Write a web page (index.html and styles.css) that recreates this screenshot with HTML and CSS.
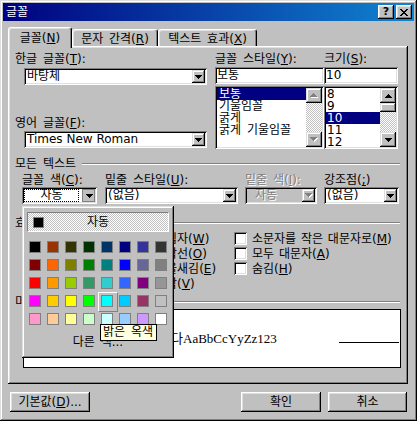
FILE: index.html
```html
<!DOCTYPE html>
<html lang="ko">
<head>
<meta charset="utf-8">
<title>글꼴</title>
<link rel="stylesheet" href="styles.css">
</head>
<body>
<div class="window">
  <div class="titlebar">
    <span class="title">글꼴</span>
    <div class="tbtns">
      <span class="tbtn help">?</span>
      <span class="tbtn close"><svg width="8" height="7" viewBox="0 0 8 7"><path d="M0 0h2v1h-2zM6 0h2v1h-2zM1 1h2v1h-2zM5 1h2v1h-2zM2 2h4v1h-4zM3 3h2v1h-2zM2 4h4v1h-4zM1 5h2v1h-2zM5 5h2v1h-2zM0 6h2v1h-2zM6 6h2v1h-2z"/></svg></span>
    </div>
  </div>

  <div class="main">
    <div class="tabs">
      <div class="tab active">글꼴(<u>N</u>)</div>
      <div class="tab t2">문자 간격(<u>R</u>)</div>
      <div class="tab t3">텍스트 효과(<u>X</u>)</div>
    </div>

    <div class="panel">
      <div class="fontsec">
        <div class="col-l">
          <div class="lbl">한글 글꼴(<u>T</u>):</div>
          <div class="combo han"><span class="val">바탕체</span><span class="dd"><svg width="7" height="4" viewBox="0 0 7 4"><path d="M0 0h7v1h-1v1h-1v1h-1v1h-1v-1h-1v-1h-1v-1h-1z"/></svg></span></div>
          <div class="lbl lbl-en">영어 글꼴(<u>F</u>):</div>
          <div class="combo en"><span class="val">Times New Roman</span><span class="dd"><svg width="7" height="4" viewBox="0 0 7 4"><path d="M0 0h7v1h-1v1h-1v1h-1v1h-1v-1h-1v-1h-1v-1h-1z"/></svg></span></div>
        </div>
        <div class="col-m">
          <div class="lbl">글꼴 스타일(<u>Y</u>):</div>
          <div class="field">보통</div>
          <div class="list">
            <div class="items">
              <div class="it sel">보통</div>
              <div class="it">기울임꼴</div>
              <div class="it">굵게</div>
              <div class="it">굵게 기울임꼴</div>
            </div>
            <div class="sb">
              <span class="sbb"><svg width="8" height="5" viewBox="0 0 8 5"><path fill="#fff" d="M4 1h1v1h1v1h1v1h1v1h-7v-1h1v-1h1v-1h1z"/><path fill="#808080" d="M3 0h1v1h1v1h1v1h1v1h-7v-1h1v-1h1v-1h1z"/></svg></span>
              <span class="track"></span>
              <span class="sbb"><svg width="8" height="5" viewBox="0 0 8 5"><path fill="#fff" d="M1 1h7v1h-1v1h-1v1h-1v1h-1v-1h-1v-1h-1v-1h-1z"/><path fill="#808080" d="M0 0h7v1h-1v1h-1v1h-1v1h-1v-1h-1v-1h-1v-1h-1z"/></svg></span>
            </div>
          </div>
        </div>
        <div class="col-r">
          <div class="lbl">크기(<u>S</u>):</div>
          <div class="field">10</div>
          <div class="list">
            <div class="items">
              <div class="it">8</div>
              <div class="it">9</div>
              <div class="it sel">10</div>
              <div class="it">11</div>
              <div class="it">12</div>
            </div>
            <div class="sb">
              <span class="sbb"><svg width="7" height="4" viewBox="0 0 7 4"><path d="M3 0h1v1h1v1h1v1h1v1h-7v-1h1v-1h1v-1h1z"/></svg></span>
              <span class="thumb"></span>
              <span class="track"></span>
              <span class="sbb"><svg width="7" height="4" viewBox="0 0 7 4"><path d="M0 0h7v1h-1v1h-1v1h-1v1h-1v-1h-1v-1h-1v-1h-1z"/></svg></span>
            </div>
          </div>
        </div>
      </div>

      <div class="ghead h-all"><span>모든 텍스트</span><i class="etch"></i></div>

      <div class="attrs">
        <div class="lbl">글꼴 색(<u>C</u>):</div>
        <div class="lbl">밑줄 스타일(<u>U</u>):</div>
        <div class="lbl dis">밑줄 색(<u>I</u>):</div>
        <div class="lbl">강조점(<u>;</u>)</div>
        <div class="combo fcolor"><span class="val"><span class="focus">자동</span></span><span class="dd pressed"><svg width="7" height="4" viewBox="0 0 7 4"><path d="M0 0h7v1h-1v1h-1v1h-1v1h-1v-1h-1v-1h-1v-1h-1z"/></svg></span></div>
        <div class="combo ustyle"><span class="val">(없음)</span><span class="dd"><svg width="7" height="4" viewBox="0 0 7 4"><path d="M0 0h7v1h-1v1h-1v1h-1v1h-1v-1h-1v-1h-1v-1h-1z"/></svg></span></div>
        <div class="combo ucolor disabled"><span class="val">자동</span><span class="dd"><svg width="8" height="5" viewBox="0 0 8 5"><path fill="#fff" d="M1 1h7v1h-1v1h-1v1h-1v1h-1v-1h-1v-1h-1v-1h-1z"/><path fill="#808080" d="M0 0h7v1h-1v1h-1v1h-1v1h-1v-1h-1v-1h-1v-1h-1z"/></svg></span></div>
        <div class="combo emph"><span class="val">(없음)</span><span class="dd"><svg width="7" height="4" viewBox="0 0 7 4"><path d="M0 0h7v1h-1v1h-1v1h-1v1h-1v-1h-1v-1h-1v-1h-1z"/></svg></span></div>
      </div>

      <div class="ghead h-fx"><span>효과</span><i class="etch"></i></div>

      <div class="effects">
        <div class="chk"><i class="box"></i><span>취소선(<u>K</u>)</span></div>
        <div class="chk"><i class="box"></i><span>이중 취소선(<u>L</u>)</span></div>
        <div class="chk"><i class="box"></i><span>위 첨자(<u>P</u>)</span></div>
        <div class="chk"><i class="box"></i><span>아래 첨자(<u>B</u>)</span></div>
        <div class="chk"><i class="box"></i><span>그림자(<u>W</u>)</span></div>
        <div class="chk"><i class="box"></i><span>외곽선(<u>O</u>)</span></div>
        <div class="chk"><i class="box"></i><span>돋을새김(<u>E</u>)</span></div>
        <div class="chk"><i class="box"></i><span>양각(<u>V</u>)</span></div>
        <div class="chk"><i class="box"></i><span>소문자를 작은 대문자로(<u>M</u>)</span></div>
        <div class="chk"><i class="box"></i><span>모두 대문자(<u>A</u>)</span></div>
        <div class="chk"><i class="box"></i><span>숨김(<u>H</u>)</span></div>
      </div>

      <div class="ghead h-pv"><span>미리 보기</span><i class="etch"></i></div>

      <div class="preview">
        <span class="pv-pad"></span>
        <span class="pv-text"><span class="ko">가나다</span>AaBbCcYyZz123</span>
        <span class="pv-line"></span>
      </div>
    </div>

    <div class="buttons">
      <div class="btn"><span>기본값(<u>D</u>)...</span></div>
      <span class="spacer"></span>
      <div class="btn"><span>확인</span></div>
      <div class="btn cancel"><span>취소</span></div>
    </div>
  </div>

  <div class="popup">
    <div class="auto"><i class="autosw"></i><span>자동</span><span></span></div>
    <div class="swatches">
      <span class="sw" style="background:#000000"></span>
      <span class="sw" style="background:#993300"></span>
      <span class="sw" style="background:#333300"></span>
      <span class="sw" style="background:#003300"></span>
      <span class="sw" style="background:#003366"></span>
      <span class="sw" style="background:#000080"></span>
      <span class="sw" style="background:#333399"></span>
      <span class="sw" style="background:#333333"></span>
      <span class="sw" style="background:#800000"></span>
      <span class="sw" style="background:#ff6600"></span>
      <span class="sw" style="background:#808000"></span>
      <span class="sw" style="background:#008000"></span>
      <span class="sw" style="background:#008080"></span>
      <span class="sw" style="background:#0000ff"></span>
      <span class="sw" style="background:#666699"></span>
      <span class="sw" style="background:#808080"></span>
      <span class="sw" style="background:#ff0000"></span>
      <span class="sw" style="background:#ff9900"></span>
      <span class="sw" style="background:#99cc00"></span>
      <span class="sw" style="background:#339966"></span>
      <span class="sw" style="background:#33cccc"></span>
      <span class="sw" style="background:#3366ff"></span>
      <span class="sw" style="background:#800080"></span>
      <span class="sw" style="background:#969696"></span>
      <span class="sw" style="background:#ff00ff"></span>
      <span class="sw" style="background:#ffcc00"></span>
      <span class="sw" style="background:#ffff00"></span>
      <span class="sw" style="background:#00ff00"></span>
      <span class="sw cur" style="background:#00ffff"></span>
      <span class="sw" style="background:#00ccff"></span>
      <span class="sw" style="background:#993366"></span>
      <span class="sw" style="background:#c0c0c0"></span>
      <span class="sw" style="background:#ff99cc"></span>
      <span class="sw" style="background:#ffcc99"></span>
      <span class="sw" style="background:#ffff99"></span>
      <span class="sw" style="background:#ccffcc"></span>
      <span class="sw" style="background:#ccffff"></span>
      <span class="sw" style="background:#99ccff"></span>
      <span class="sw" style="background:#cc99ff"></span>
      <span class="sw" style="background:#ffffff"></span>
    </div>
    <div class="more">다른 색...</div>
  </div>

  <div class="tip">밝은 옥색</div>
</div>
</body>
</html>
```

FILE: styles.css
```css
* { box-sizing: border-box; margin: 0; padding: 0; }

html, body { width: 417px; height: 421px; overflow: hidden; }

body {
  font-family: "DejaVu Sans", "Noto Sans CJK KR", sans-serif;
  font-size: 12px;
  line-height: 12px;
  color: #000;
  background: #c0c0c0;
  word-spacing: 2px;
}

u { text-decoration: underline; text-underline-offset: 1px; }

.window {
  position: relative;
  width: 417px;
  height: 421px;
  padding: 3px;
  background: #c0c0c0;
  box-shadow: inset -1px -1px #000, inset 1px 1px #dfdfdf, inset -2px -2px #808080, inset 2px 2px #fff;
}

/* title bar */
.titlebar {
  height: 18px;
  display: flex;
  align-items: center;
  justify-content: space-between;
  padding: 0 2px 0 3px;
  background: linear-gradient(90deg, #000080, #1084d0);
}
.title { color: #fff; line-height: 14px; }
.tbtns { display: flex; gap: 2px; }
.tbtn {
  width: 16px;
  height: 14px;
  display: flex;
  align-items: center;
  justify-content: center;
  background: #c0c0c0;
  box-shadow: inset -1px -1px #000, inset 1px 1px #fff, inset -2px -2px #808080, inset 2px 2px #dfdfdf;
  font: bold 11px/14px "DejaVu Sans", sans-serif;
}
.tbtn svg { display: block; }

/* main */
.main { padding: 6px 6px 0 5px; }

.tabs {
  display: flex;
  align-items: flex-end;
  height: 19px;
  position: relative;
  z-index: 1;
}
.tab {
  height: 17px;
  padding-top: 3px;
  text-align: center;
  white-space: nowrap;
  background: #c0c0c0;
  border: 1px solid #fff;
  border-right-color: #000;
  border-bottom: 0;
  border-radius: 3px 3px 0 0;
  box-shadow: inset -1px 0 #808080, inset 1px 1px #dfdfdf;
}
.tab.active { width: 64px; height: 21px; margin-bottom: -2px; padding-top: 4px; }
.tab.t2 { width: 86px; }
.tab.t3 { width: 99px; }

.panel {
  height: 338px;
  padding: 2px;
  box-shadow: inset -1px -1px #000, inset 1px 1px #fff, inset -2px -2px #808080, inset 2px 2px #dfdfdf;
}

.lbl { height: 12px; line-height: 12px; white-space: nowrap; }
.dis { color: #808080; text-shadow: 1px 1px #fff; }

/* font section */
.fontsec { display: flex; margin-top: 5px; padding-left: 5px; height: 96px; }
.col-l { width: 200px; display: flex; flex-direction: column; }
.col-m { width: 109px; display: flex; flex-direction: column; }
.col-r { width: 74px; display: flex; flex-direction: column; }

.col-l .combo { margin-left: 9px; width: 183px; margin-top: 3px; }
.col-l .lbl-en { margin-top: 32px; }
.col-l .combo.en { margin-top: 2px; }
.combo.en .val { word-spacing: 0; }

.combo {
  display: flex;
  align-items: center;
  height: 17px;
  padding: 2px;
  background: #fff;
  box-shadow: inset 1px 1px #808080, inset -1px -1px #fff, inset 2px 2px #000, inset -2px -2px #dfdfdf;
}
.combo .val { flex: 1; padding-left: 1px; line-height: 13px; white-space: nowrap; overflow: hidden; }
.dd {
  width: 13px;
  height: 13px;
  flex: none;
  display: flex;
  align-items: center;
  justify-content: center;
  background: #c0c0c0;
  box-shadow: inset -1px -1px #000, inset 1px 1px #dfdfdf, inset -2px -2px #808080, inset 2px 2px #fff;
}
.dd svg, .sbb svg { display: block; }
.dd.pressed { box-shadow: inset 0 0 0 1px #808080; padding: 1px 0 0 1px; }

.field {
  height: 17px;
  margin-top: 2px;
  padding: 2px;
  line-height: 13px;
  background: #fff;
  box-shadow: inset 1px 1px #808080, inset -1px -1px #fff, inset 2px 2px #000, inset -2px -2px #dfdfdf;
}
.list {
  height: 63px;
  margin-top: 2px;
  padding: 2px;
  display: flex;
  background: #fff;
  box-shadow: inset 1px 1px #808080, inset -1px -1px #fff, inset 2px 2px #000, inset -2px -2px #dfdfdf;
}
.items { flex: 1; overflow: hidden; }
.it { height: 12px; line-height: 12px; padding-left: 1px; white-space: nowrap; }
.col-m .it { padding-left: 2px; }
.it.sel { background: #000080; color: #fff; }

.sb { width: 16px; flex: none; display: flex; flex-direction: column; }
.sbb, .thumb {
  flex: none;
  display: flex;
  align-items: center;
  justify-content: center;
  background: #c0c0c0;
  box-shadow: inset -1px -1px #000, inset 1px 1px #dfdfdf, inset -2px -2px #808080, inset 2px 2px #fff;
}
.sbb { height: 15px; }
.thumb { height: 9px; }
.track {
  flex: 1;
  background-color: #fff;
  background-image: repeating-conic-gradient(#c0c0c0 0 25%, #fff 0 50%);
  background-size: 2px 2px;
}

/* group headers */
.ghead { display: flex; align-items: center; height: 12px; padding: 0 6px 0 5px; white-space: nowrap; }
.etch { flex: 1; height: 2px; margin-left: 6px; border-top: 1px solid #808080; border-bottom: 1px solid #fff; }
.h-all { margin-top: 9px; }
.h-fx { margin-top: 13px; }
.h-pv { margin-top: 5px; }

/* attributes row */
.attrs {
  display: grid;
  grid-template-columns: 83px 140px 79px 75px;
  padding-left: 12px;
  margin-top: 4px;
}
.attrs .combo { margin-top: 1px; }
.fcolor { width: 75px; }
.ustyle { width: 133px; }
.ucolor { width: 72px; }
.emph { width: 75px; }
.fcolor .val { padding: 0 3px 0 0; }
.focus { display: block; outline: 1px dotted #000; outline-offset: -1px; text-align: center; line-height: 13px; }
.combo.disabled { background: #c0c0c0; }
.combo.disabled .val { color: #808080; text-shadow: 1px 1px #fff; padding-left: 8px; }

/* effects */
.effects {
  display: grid;
  grid-auto-flow: column;
  grid-template-rows: repeat(4, 15px);
  grid-template-columns: 115px 97px 1fr;
  padding-left: 12px;
  margin-top: 2px;
}
.chk { display: flex; align-items: center; gap: 5px; white-space: nowrap; word-spacing: 1px; }
.box {
  width: 13px;
  height: 13px;
  flex: none;
  background: #fff;
  box-shadow: inset 1px 1px #808080, inset -1px -1px #fff, inset 2px 2px #000, inset -2px -2px #dfdfdf;
}

/* preview */
.preview {
  margin: 1px 0 0 13px;
  width: 378px;
  height: 59px;
  background: #fff;
  border: 1px solid #000;
  display: grid;
  grid-template-columns: 1fr auto 1fr;
  align-items: baseline;
  align-content: center;
}
.pv-text {
  font-family: "Liberation Serif", "Noto Sans CJK KR", serif;
  font-size: 13px;
  line-height: 15px;
  word-spacing: 0;
  white-space: nowrap;
}
.pv-line { justify-self: end; width: 60px; height: 1px; background: #000; margin-right: 1px; }

/* buttons */
.buttons { display: flex; margin-top: 8px; padding: 0 1px 0 2px; }
.spacer { flex: 1; }
.btn {
  width: 80px;
  height: 20px;
  display: flex;
  align-items: center;
  justify-content: center;
  white-space: nowrap;
  box-shadow: inset -1px -1px #000, inset 1px 1px #fff, inset -2px -2px #808080, inset 2px 2px #dfdfdf;
}
.btn.cancel { width: 79px; margin-left: 7px; }

/* colour popup */
.popup {
  position: absolute;
  left: 22px;
  top: 206px;
  width: 152px;
  height: 152px;
  padding: 6px 5px 0;
  background: #c0c0c0;
  box-shadow: inset -1px -1px #000, inset 1px 1px #dfdfdf, inset -2px -2px #808080, inset 2px 2px #fff;
  z-index: 2;
}
.auto {
  height: 20px;
  display: grid;
  grid-template-columns: 1fr auto 1fr;
  align-items: center;
  border: 1px solid;
  border-color: #808080 #fff #fff #808080;
  background-color: #fff;
  background-image: repeating-conic-gradient(#c0c0c0 0 25%, #fff 0 50%);
  background-size: 2px 2px;
}
.auto span { line-height: 12px; }
.autosw { width: 11px; height: 11px; margin-left: 5px; background: #000; border: 1px solid #808080; }
.swatches {
  display: grid;
  grid-template-columns: repeat(8, 12px);
  grid-auto-rows: 12px;
  gap: 6px;
  margin: 9px 0 0 2px;
}
.sw { width: 12px; height: 12px; border: 1px solid #808080; position: relative; }
.sw.cur::before {
  content: "";
  position: absolute;
  left: -4px;
  top: -4px;
  width: 18px;
  height: 18px;
  border: 1px solid;
  border-color: #fff #808080 #808080 #fff;
}
.more { margin-top: 11px; text-align: center; line-height: 12px; }

.tip {
  position: absolute;
  left: 100px;
  top: 324px;
  width: 57px;
  height: 17px;
  padding-left: 2px;
  line-height: 15px;
  white-space: nowrap;
  background: #ffffe1;
  border: 1px solid #000;
  z-index: 3;
}
```
